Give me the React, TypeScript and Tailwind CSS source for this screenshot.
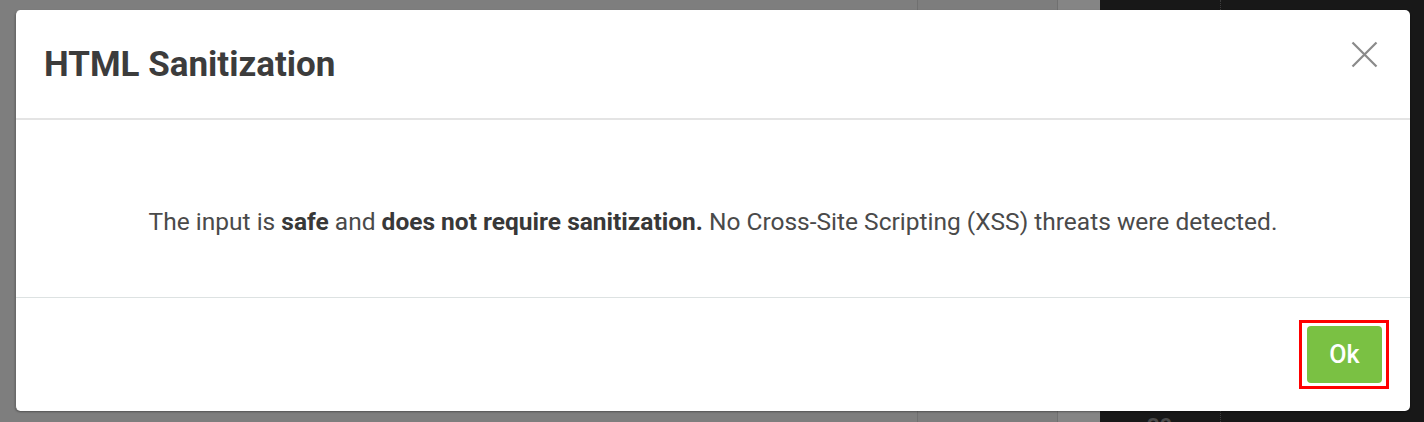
import React from "react";

const font = { fontFamily: "Roboto, 'Noto Sans', Arial, sans-serif" };

const Backdrop = () => {
  return (
    <div className="flex h-full w-full">
      <div className="w-[917px] bg-[#7e7e7e]" />
      <div className="w-[141px] border-x border-[#707070] bg-[#7d7d7d]" />
      <div className="w-[42px] bg-[#858585]" />
      <div className="flex flex-1 bg-[#181818]">
        <div className="flex w-[120px] flex-col justify-end pl-[47px]">
          <span className="translate-y-[16px] text-[22px] font-bold leading-none text-[#4a4a4a]">30</span>
        </div>
        <div className="flex-1 border-l border-dotted border-[#3c3c3c]" />
      </div>
    </div>
  );
};

const CloseIcon = () => (
  <svg width="27" height="27" viewBox="0 0 27 27" fill="none">
    <path d="M1.5 1.5L25.5 25.5M25.5 1.5L1.5 25.5" stroke="#8a8a8a" strokeWidth="2.2" />
  </svg>
);

export default function App() {
  return (
    <div className="relative h-[422px] w-[1424px] overflow-hidden" style={font}>
      <Backdrop />

      <div className="absolute left-[15px] top-[10px] flex h-[401px] w-[1395px] flex-col rounded-[5px] border-l border-[#6a6a6a] bg-white shadow-[0_1px_2px_rgba(0,0,0,0.35)]">
        <div className="flex h-[110px] shrink-0 items-center justify-between border-b-2 border-[#e4e4e4] pl-[28px] pr-[32px]">
          <h2 className="pt-[2px] text-[35px] font-bold text-[#3c3c3c]">HTML Sanitization</h2>
          <button className="-mt-[20px] flex items-center justify-center">
            <CloseIcon />
          </button>
        </div>

        <div className="flex h-[178px] shrink-0 items-center justify-center border-b border-[#dde2e2] pt-[28px]">
          <p className="text-[24.5px] text-[#4a4a4a]">
            The input is <b className="font-bold text-[#383838]">safe</b> and{" "}
            <b className="font-bold text-[#383838]">does not require sanitization.</b> No Cross-Site Scripting (XSS)
            threats were detected.
          </p>
        </div>

        <div className="flex flex-1 items-center justify-end pr-[21px]">
          <div className="border-[3px] border-[#ff0000] py-[3px] pl-[5px] pr-[4px]">
            <button className="flex h-[57px] w-[75px] items-center justify-center rounded-[4px] bg-[#7ac143] text-[25px] font-medium text-white">
              Ok
            </button>
          </div>
        </div>
      </div>
    </div>
  );
}
